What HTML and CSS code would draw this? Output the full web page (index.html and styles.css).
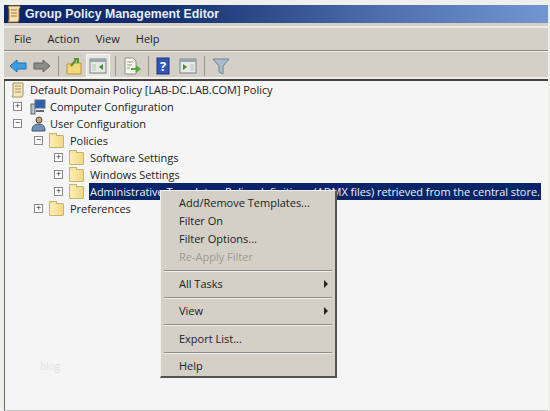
FILE: index.html
```html
<!DOCTYPE html>
<html lang="en">
<head>
  <meta charset="UTF-8">
  <title>Group Policy Management Editor</title>
  <link rel="stylesheet" href="styles.css">
</head>
<body>
  <div class="window">
    <div class="titlebar">
      <svg class="title-icon" width="16" height="18" viewBox="0 0 16 18">
        <path d="M3 1h11v2l-1 1v11l-1 2H2l1-2V4L2 2z" fill="#f4e3b0" stroke="#a5702c"/>
        <path d="M5 5h6M5 8h6M5 11h6" stroke="#a5702c"/>
      </svg>
      <span>Group Policy Management Editor</span>
    </div>

    <div class="menubar">
      <span>File</span>
      <span>Action</span>
      <span>View</span>
      <span>Help</span>
    </div>

    <div class="toolbar">
      <svg class="tool" width="18" height="18" viewBox="0 0 18 18"><path d="M1 9l7-6v3h9v6H8v3z" fill="#3f9fe0" stroke="#1d6fb0"/></svg>
      <svg class="tool" width="18" height="18" viewBox="0 0 18 18"><path d="M17 9l-7-6v3H1v6h9v3z" fill="#8d8d88" stroke="#63635f"/></svg>
      <i class="sep"></i>
      <svg class="tool" width="16" height="18" viewBox="0 0 16 18"><path d="M1 7h4l1-1h9v11H1z" fill="#f2d878" stroke="#b5963c"/><path d="M5 9l5-6M8 2h4v4" stroke="#4f9a2c" stroke-width="2" fill="none"/></svg>
      <span class="tool-on">
        <svg width="18" height="16" viewBox="0 0 18 16"><rect x="1" y="1" width="16" height="14" fill="#e8e8e4" stroke="#77838c"/><rect x="1" y="1" width="16" height="3" fill="#9aa6ae"/><rect x="3" y="6" width="4" height="7" fill="#cfd8d0"/><path d="M14 6v6l-4-3z" fill="#3c8a3c"/></svg>
      </span>
      <i class="sep"></i>
      <svg class="tool" width="18" height="18" viewBox="0 0 18 18"><path d="M2 1h8l3 3v13H2z" fill="#f6f6f0" stroke="#8f8f88"/><path d="M4 5h6M4 8h5M4 11h3" stroke="#8f9a70"/><path d="M8 11h5V8l5 4-5 4v-3H8z" fill="#58a83c"/></svg>
      <i class="sep"></i>
      <svg class="tool" width="14" height="18" viewBox="0 0 14 18"><rect x="1" y="1" width="12" height="16" fill="#2f55b5" stroke="#1c3580"/><text x="7" y="14" class="help-mark">?</text></svg>
      <svg class="tool tool-next" width="18" height="16" viewBox="0 0 18 16"><rect x="1" y="1" width="16" height="14" fill="#e8e8e4" stroke="#77838c"/><rect x="1" y="1" width="16" height="3" fill="#9aa6ae"/><rect x="11" y="6" width="4" height="7" fill="#cfd8d0"/><path d="M4 6v6l4-3z" fill="#3c8a3c"/></svg>
      <i class="sep"></i>
      <svg class="tool" width="18" height="18" viewBox="0 0 18 18"><path d="M1 2h16l-6 7v8l-4-2V9z" fill="#a8bccb" stroke="#6f8494"/></svg>
    </div>

    <div class="tree">
      <div class="row">
        <svg class="node-icon root-icon" width="16" height="16" viewBox="0 0 16 16"><path d="M3 1h10v12l-1 2H2l1-2z" fill="#f4e6bc" stroke="#a89258"/><path d="M5 4h6M5 7h6M5 10h6" stroke="#a89258"/></svg>
        <span class="label">Default Domain Policy [LAB-DC.LAB.COM] Policy</span>
      </div>
      <div class="row">
        <i class="box">+</i>
        <svg class="node-icon" width="16" height="16" viewBox="0 0 16 16"><rect x="5" y="1" width="10" height="8" fill="#2f5fb0" stroke="#5c6a78"/><rect x="1" y="5" width="4" height="10" fill="#b8c0c8" stroke="#5c6a78"/><path d="M6 12h8" stroke="#5c6a78" stroke-width="2"/></svg>
        <span class="label">Computer Configuration</span>
      </div>
      <div class="row">
        <i class="box">−</i>
        <svg class="node-icon" width="16" height="16" viewBox="0 0 16 16"><circle cx="9" cy="4" r="3" fill="#c9a27a" stroke="#5a4a3a"/><path d="M2 15c0-5 2-7 7-7 4 0 6 2 6 7z" fill="#6f8fb8" stroke="#46586e"/></svg>
        <span class="label">User Configuration</span>
      </div>
      <div class="row lvl2">
        <i class="box">−</i>
        <i class="folder"></i>
        <span class="label">Policies</span>
      </div>
      <div class="row lvl3">
        <i class="box">+</i>
        <i class="folder"></i>
        <span class="label">Software Settings</span>
      </div>
      <div class="row lvl3">
        <i class="box">+</i>
        <i class="folder"></i>
        <span class="label">Windows Settings</span>
      </div>
      <div class="row lvl3">
        <i class="box">+</i>
        <i class="folder"></i>
        <span class="label selected">Administrative Templates: Policy definitions (ADMX files) retrieved from the central store.</span>
      </div>
      <div class="row lvl2">
        <i class="box">+</i>
        <i class="folder"></i>
        <span class="label">Preferences</span>
      </div>
      <div class="watermark">blog</div>
    </div>

    <div class="menu">
      <div class="menu-item">Add/Remove Templates...</div>
      <div class="menu-item">Filter On</div>
      <div class="menu-item">Filter Options...</div>
      <div class="menu-item disabled">Re-Apply Filter</div>
      <div class="menu-sep"></div>
      <div class="menu-item has-sub">All Tasks</div>
      <div class="menu-sep"></div>
      <div class="menu-item has-sub">View</div>
      <div class="menu-sep menu-sep-wide"></div>
      <div class="menu-item">Export List...</div>
      <div class="menu-sep"></div>
      <div class="menu-item">Help</div>
    </div>
  </div>
</body>
</html>
```

FILE: styles.css
```css
html,
body {
  margin: 0;
  padding: 0;
  height: 100%;
}

body {
  background-color: #efefec;
  font-family: "Open Sans", "Liberation Sans", sans-serif;
  font-size: 11px;
  color: #222;
  overflow: hidden;
}

.window {
  position: relative;
  width: 544px;
  height: 406px;
  margin: 5px 0 0 4px;
  background-color: #d4d0c8;
  display: flex;
  flex-direction: column;
}

.titlebar {
  height: 18px;
  display: flex;
  align-items: center;
  gap: 3px;
  padding-left: 2px;
  background: linear-gradient(to right, #0a246a, #14306f 30%, #4f6fb0 70%, #7396d2);
  color: #e8edf5;
  font-family: "Liberation Sans", sans-serif;
  font-weight: bold;
  font-size: 12.3px;
}

.title-icon {
  flex: none;
}

.menubar {
  height: 24px;
  margin-top: 3px;
  padding-left: 10px;
  display: flex;
  align-items: center;
  gap: 16px;
  border-bottom: 1px solid #8a8884;
  box-shadow: 0 1px 0 #f0eee8, inset 0 2px 0 #ebe9e2;
}

.toolbar {
  height: 27px;
  margin-top: 1px;
  padding-left: 5px;
  display: flex;
  align-items: center;
  gap: 6px;
  border-bottom: 2px solid #44443f;
  box-shadow: inset 0 -2px 0 #efeee8;
}

.tool {
  flex: none;
}

.tool-next {
  margin-left: 3px;
}

.tool-on {
  flex: none;
  width: 24px;
  height: 23px;
  margin: 0 -2px;
  display: flex;
  align-items: center;
  justify-content: center;
  background-color: #e8e6e0;
  border: 1px solid #f6f6f2;
  box-sizing: border-box;
}

.sep {
  flex: none;
  width: 1px;
  height: 20px;
  margin: 0 1px;
  background-color: #96948e;
}

.help-mark {
  fill: #fff;
  font-size: 13px;
  font-weight: bold;
  text-anchor: middle;
}

.tree {
  position: relative;
  flex: 1;
  padding: 0 0 0 8px;
  background-color: #f5f5f5;
  border-left: 1px solid #6c6c68;
  border-bottom: 1px solid #c4c4c0;
  letter-spacing: -0.05px;
}

.row {
  height: 17px;
  display: flex;
  align-items: center;
}

.lvl2 {
  padding-left: 21px;
}

.lvl3 {
  padding-left: 41px;
}

.box {
  flex: none;
  box-sizing: border-box;
  width: 9px;
  height: 9px;
  margin-right: 6px;
  border: 1px solid #8a8a8a;
  background-color: #fff;
  font-style: normal;
  font-size: 9px;
  line-height: 6px;
  text-align: center;
  color: #222;
}

.node-icon {
  flex: none;
  margin: 0 3px 0 2px;
}

.root-icon {
  margin-left: -3px;
}

.folder {
  position: relative;
  flex: none;
  box-sizing: border-box;
  width: 15px;
  height: 13px;
  margin-top: 1px;
  margin-right: 5px;
  background: linear-gradient(to right, #fbeeb8, #f3d884);
  border: 1px solid #c9b26a;
  border-radius: 1px;
}

.folder::before {
  content: "";
  position: absolute;
  left: -1px;
  top: -3px;
  width: 6px;
  height: 2px;
  background-color: #f6e3a0;
  border: 1px solid #c9b26a;
  border-bottom: none;
}

.label {
  padding: 0 1px;
  line-height: 17px;
  white-space: nowrap;
}

.selected {
  background-color: #0a246a;
  color: #eef1f7;
}

.watermark {
  position: absolute;
  left: 35px;
  top: 278px;
  color: #e2e2e2;
  font-size: 10px;
}

.menu {
  position: absolute;
  left: 156px;
  top: 185px;
  width: 177px;
  height: 188px;
  box-sizing: border-box;
  padding: 3px 2px;
  background-color: #d4d0c8;
  border: 1px solid #f2f0ea;
  border-right: 2px solid #55534f;
  border-bottom: 2px solid #55534f;
}

.menu-item {
  position: relative;
  height: 18px;
  line-height: 18px;
  padding-left: 16px;
  white-space: nowrap;
}

.disabled {
  color: #9c9a94;
}

.has-sub::after {
  content: "";
  position: absolute;
  right: 5px;
  top: 5px;
  border-left: 4px solid #222;
  border-top: 4px solid transparent;
  border-bottom: 4px solid transparent;
}

.menu-sep {
  height: 1px;
  margin: 4px 1px;
  background-color: #8e8c86;
  box-shadow: 0 1px 0 #f2f0ea;
}

.menu-sep-wide {
  margin-bottom: 5px;
}
```
